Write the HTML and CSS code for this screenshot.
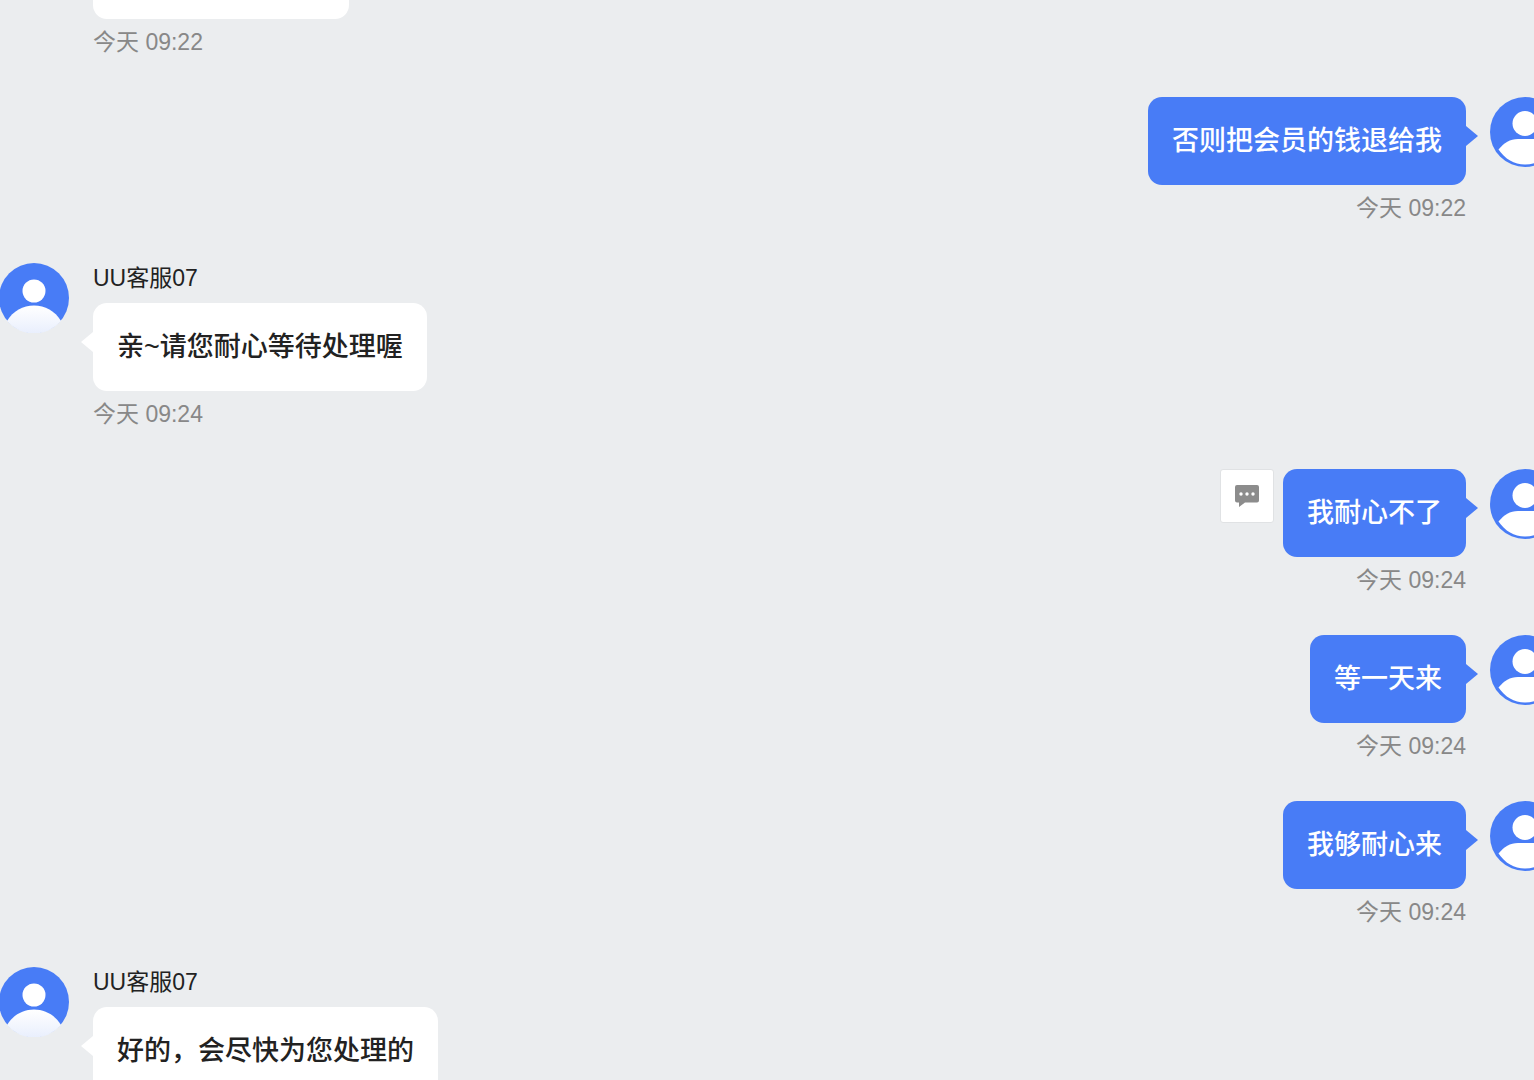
FILE: index.html
```html
<!DOCTYPE html>
<html lang="zh-CN">
<head>
  <meta charset="UTF-8" />
  <meta name="viewport" content="width=device-width, initial-scale=1.0" />
  <title>UU客服</title>
  <link rel="stylesheet" href="styles.css">
</head>
<body>

<!-- 头像图标 -->
<svg class="sprite" aria-hidden="true">
  <defs>
    <linearGradient id="bodyFill" x1="0" y1="0" x2="0" y2="1">
      <stop offset="0" stop-color="#ffffff" />
      <stop offset="1" stop-color="#e9effd" />
    </linearGradient>
    <symbol id="agent" viewBox="0 0 70 70">
      <circle cx="35" cy="35" r="35" fill="#487cf6" />
      <circle cx="35" cy="28" r="11.5" fill="#fff" />
      <path d="M8 58C14 48 24 42.5 35 42.5S56 48 62 58A35.5 35.5 0 0 1 8 58Z" fill="url(#bodyFill)" />
    </symbol>
    <symbol id="user" viewBox="0 0 70 70">
      <circle cx="35" cy="35" r="35" fill="#487cf6" />
      <circle cx="35" cy="26.5" r="12.5" fill="#fff" />
      <path d="M8.5 52.5C14 46 20 42 28 42H42C50 42 56 46 61.5 52.5C55 62 46 67.5 35 67.5S15 62 8.5 52.5Z" fill="#fff" />
    </symbol>
  </defs>
</svg>

<main class="chat">
  <div class="message agent">
    <div class="content">
      <div class="bubble-end"></div>
      <time class="time">今天 09:22</time>
    </div>
  </div>

  <div class="message user">
    <div class="content">
      <div class="row"><p class="bubble">否则把会员的钱退给我</p></div>
      <time class="time">今天 09:22</time>
    </div>
    <svg class="avatar"><use href="#user" /></svg>
  </div>

  <div class="message agent">
    <svg class="avatar"><use href="#agent" /></svg>
    <div class="content">
      <div class="name">UU客服07</div>
      <div class="row"><p class="bubble">亲~请您耐心等待处理喔</p></div>
      <time class="time">今天 09:24</time>
    </div>
  </div>

  <div class="message user">
    <div class="content">
      <div class="row">
        <button class="quote-btn" type="button" aria-label="引用">
          <svg width="24" height="22" viewBox="0 0 24 22">
            <path d="M2 0H22Q24 0 24 2V15.5Q24 17.5 22 17.5H10L4 22V17.5H2Q0 17.5 0 15.5V2Q0 0 2 0Z" fill="#8c8c8c" />
            <circle cx="6" cy="9" r="1.7" fill="#fff" />
            <circle cx="12" cy="9" r="1.7" fill="#fff" />
            <circle cx="18" cy="9" r="1.7" fill="#fff" />
          </svg>
        </button>
        <p class="bubble">我耐心不了</p>
      </div>
      <time class="time">今天 09:24</time>
    </div>
    <svg class="avatar"><use href="#user" /></svg>
  </div>

  <div class="message user">
    <div class="content">
      <div class="row"><p class="bubble">等一天来</p></div>
      <time class="time">今天 09:24</time>
    </div>
    <svg class="avatar"><use href="#user" /></svg>
  </div>

  <div class="message user">
    <div class="content">
      <div class="row"><p class="bubble">我够耐心来</p></div>
      <time class="time">今天 09:24</time>
    </div>
    <svg class="avatar"><use href="#user" /></svg>
  </div>

  <div class="message agent">
    <svg class="avatar"><use href="#agent" /></svg>
    <div class="content">
      <div class="name">UU客服07</div>
      <div class="row"><p class="bubble">好的，会尽快为您处理的</p></div>
    </div>
  </div>
</main>

</body>
</html>
```

FILE: styles.css
```css
* {
  box-sizing: border-box;
}

body {
  margin: 0;
  height: 100vh;
  overflow: hidden;
  background-color: #ebedef;
  color: #222;
  font-family: "Liberation Sans", "Noto Sans CJK SC", sans-serif;
}

.sprite {
  position: absolute;
  width: 0;
  height: 0;
}

/* the avatars run past both edges of the window */
.chat {
  display: flex;
  flex-direction: column;
  gap: 40px;
  margin: 0 -26px 0 -1px;
}

.message {
  display: flex;
  gap: 24px;
}

.message.user {
  justify-content: flex-end;
}

.avatar {
  flex: none;
  width: 70px;
  height: 70px;
}

.content {
  display: flex;
  flex-direction: column;
  align-items: flex-start;
}

.user .content {
  align-items: flex-end;
}

.name {
  margin-bottom: 10px;
  font-size: 23px;
  line-height: 30px;
}

.row {
  display: flex;
  align-items: flex-start;
  gap: 9px;
}

.bubble {
  position: relative;
  margin: 0;
  padding: 24px;
  border-radius: 14px;
  background-color: #fff;
  font-size: 27px;
  font-weight: 500;
  line-height: 40px;
}

.user .bubble {
  background-color: #487cf6;
  color: #fff;
}

/* arrow that points at the avatar */
.bubble::before {
  content: "";
  position: absolute;
  top: 29px;
  right: 100%;
  border: 10px solid transparent;
  border-left: 0;
  border-right: 12px solid #fff;
}

.user .bubble::before {
  right: auto;
  left: 100%;
  border-right: 0;
  border-left: 12px solid #487cf6;
}

.bubble-end {
  width: 256px;
  height: 19px;
  margin-left: 94px;
  border-radius: 0 0 14px 14px;
  background-color: #fff;
}

.bubble-end + .time {
  margin-left: 94px;
}

.time {
  margin-top: 8px;
  color: #888;
  font-size: 23px;
  line-height: 30px;
}

.quote-btn {
  display: flex;
  align-items: center;
  justify-content: center;
  width: 54px;
  height: 54px;
  padding: 0;
  border: 1px solid #e0e2e4;
  border-radius: 3px;
  background-color: #fff;
  cursor: pointer;
}
```
